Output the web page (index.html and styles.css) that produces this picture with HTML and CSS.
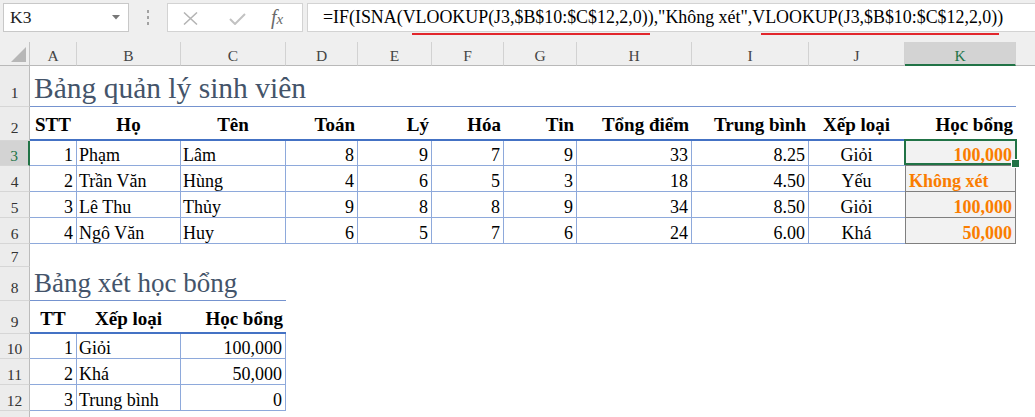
FILE: index.html
```html
<!DOCTYPE html>
<html lang="vi">
<head>
<meta charset="utf-8">
<title>Bảng quản lý sinh viên</title>
<link rel="stylesheet" href="styles.css">
</head>
<body>
<div class="formula-bar">
  <div class="name-box">
    <span class="name">K3</span>
    <svg class="drop" width="8" height="5" viewBox="0 0 8 5"><path d="M0 0 L8 0 L4 4.5 Z" fill="#777"/></svg>
  </div>
  <div class="grip"><i></i><i></i><i></i></div>
  <div class="fx-box">
    <svg class="ico-x" width="15" height="13" viewBox="0 0 15 13"><path d="M1 0.5 L14 12.5 M14 0.5 L1 12.5" stroke="#b4b4b4" stroke-width="1.5" fill="none"/></svg>
    <svg class="ico-ok" width="17" height="12" viewBox="0 0 17 12"><path d="M1 6 L6 11 L16 1" stroke="#c2c2c2" stroke-width="2" fill="none"/></svg>
    <span class="fx"><i>f</i><i class="sx">x</i></span>
  </div>
  <div class="formula">=IF(ISNA(<span class="mark">VLOOKUP(J3,$B$10:$C$12,2,0)</span>),"Không xét",<span class="mark">VLOOKUP(J3,$B$10:$C$12,2,0)</span>)</div>
</div>

<div class="sheet">
  <div class="row r-head">
    <div class="ch corner"><svg width="15" height="15" viewBox="0 0 15 15"><path d="M15 0 L15 15 L0 15 Z" fill="#b7b7b7"/></svg></div>
    <div class="ch">A</div><div class="ch">B</div><div class="ch">C</div><div class="ch">D</div>
    <div class="ch">E</div><div class="ch">F</div><div class="ch">G</div><div class="ch">H</div>
    <div class="ch">I</div><div class="ch">J</div><div class="ch sel">K</div><div class="ch last"></div>
  </div>

  <div class="row r1">
    <div class="rh">1</div>
    <div class="c title span-ak">Bảng quản lý sinh viên</div>
  </div>

  <div class="row r2">
    <div class="rh">2</div>
    <div class="c th ctr">STT</div>
    <div class="c th ctr">Họ</div>
    <div class="c th ctr">Tên</div>
    <div class="c th num">Toán</div>
    <div class="c th num">Lý</div>
    <div class="c th num">Hóa</div>
    <div class="c th num">Tin</div>
    <div class="c th num">Tổng điểm</div>
    <div class="c th num">Trung bình</div>
    <div class="c th ctr">Xếp loại</div>
    <div class="c th num">Học bổng</div>
  </div>

  <div class="row r3">
    <div class="rh sel">3</div>
    <div class="c td num">1</div><div class="c td">Phạm</div><div class="c td">Lâm</div>
    <div class="c td num">8</div><div class="c td num">9</div><div class="c td num">7</div><div class="c td num">9</div>
    <div class="c td num">33</div><div class="c td num">8.25</div><div class="c td ctr open">Giỏi</div>
    <div class="c calc num active">100,000</div>
  </div>

  <div class="row r4">
    <div class="rh">4</div>
    <div class="c td num">2</div><div class="c td">Trần Văn</div><div class="c td">Hùng</div>
    <div class="c td num">4</div><div class="c td num">6</div><div class="c td num">5</div><div class="c td num">3</div>
    <div class="c td num">18</div><div class="c td num">4.50</div><div class="c td ctr open">Yếu</div>
    <div class="c calc">Không xét</div>
  </div>

  <div class="row r5">
    <div class="rh">5</div>
    <div class="c td num">3</div><div class="c td">Lê Thu</div><div class="c td">Thủy</div>
    <div class="c td num">9</div><div class="c td num">8</div><div class="c td num">8</div><div class="c td num">9</div>
    <div class="c td num">34</div><div class="c td num">8.50</div><div class="c td ctr open">Giỏi</div>
    <div class="c calc num">100,000</div>
  </div>

  <div class="row r6">
    <div class="rh">6</div>
    <div class="c td num">4</div><div class="c td">Ngô Văn</div><div class="c td">Huy</div>
    <div class="c td num">6</div><div class="c td num">5</div><div class="c td num">7</div><div class="c td num">6</div>
    <div class="c td num">24</div><div class="c td num">6.00</div><div class="c td ctr open">Khá</div>
    <div class="c calc num">50,000</div>
  </div>

  <div class="row r7">
    <div class="rh">7</div>
  </div>

  <div class="row r8">
    <div class="rh">8</div>
    <div class="c title2 span-ac">Bảng xét học bổng</div>
  </div>

  <div class="row r9">
    <div class="rh">9</div>
    <div class="c th ctr">TT</div>
    <div class="c th ctr">Xếp loại</div>
    <div class="c th num">Học bổng</div>
  </div>

  <div class="row r10">
    <div class="rh">10</div>
    <div class="c td num">1</div><div class="c td">Giỏi</div><div class="c td num">100,000</div>
  </div>

  <div class="row r11">
    <div class="rh">11</div>
    <div class="c td num">2</div><div class="c td">Khá</div><div class="c td num">50,000</div>
  </div>

  <div class="row r12">
    <div class="rh">12</div>
    <div class="c td num">3</div><div class="c td">Trung bình</div><div class="c td num">0</div>
  </div>

  <div class="row r13">
    <div class="rh"></div>
  </div>
</div>
</body>
</html>
```

FILE: styles.css
```css
* { box-sizing: border-box; }

body {
  margin: 0;
  background: #ffffff;
  font-family: "Liberation Serif", "Times New Roman", serif;
  color: #000;
  overflow: hidden;
}

/* ---------- formula bar ---------- */
.formula-bar {
  display: flex;
  align-items: flex-start;
  height: 42px;
  padding: 3px 0 0 3px;
  background: #efefef;
}

.name-box {
  width: 126px;
  height: 29px;
  background: #fff;
  border: 1px solid #c8c8c8;
  display: flex;
  align-items: center;
  justify-content: space-between;
  padding: 0 8px 0 6px;
  font-family: "Liberation Serif", serif;
  font-size: 17.5px;
  color: #222;
}

.grip {
  width: 38px;
  height: 29px;
  display: flex;
  flex-direction: column;
  align-items: center;
  justify-content: center;
  gap: 3px;
}
.grip i {
  display: block;
  width: 2px;
  height: 3px;
  background: #a2a2a2;
}

.fx-box {
  width: 136px;
  height: 29px;
  background: #fff;
  border: 1px solid #d3d3d3;
  display: flex;
  align-items: center;
  padding-left: 15px;
}
.ico-x { margin-top: 1px; }
.ico-ok { margin-left: 31px; margin-top: 3px; }
.fx {
  margin-left: 25px;
  color: #6a6a6a;
  font-size: 20px;
  line-height: 20px;
  white-space: nowrap;
}
.fx .sx { font-size: 15px; }

.formula {
  flex: 1;
  height: 29px;
  margin-left: 4px;
  margin-right: -2px;
  background: #fff;
  border: 1px solid #d3d3d3;
  padding-left: 15px;
  font-size: 17.9px;
  line-height: 26px;
  white-space: nowrap;
  color: #000;
}
.mark { position: relative; }
.mark::after {
  content: "";
  position: absolute;
  left: 9px;
  right: -2px;
  bottom: -8px;
  height: 2px;
  background: #e2262c;
}

/* ---------- sheet grid ---------- */
.row {
  display: grid;
  grid-template-columns: 30px 47px 104px 105px 72px 74px 72px 73px 115px 117px 96px 111px 1fr;
}
.r-head { height: 24px; }
.r1 { height: 41px; }
.r2 { height: 34px; }
.r3 { height: 25px; }
.r4, .r5, .r6 { height: 26px; }
.r7 { height: 23px; }
.r8 { height: 34px; }
.r9 { height: 33px; }
.r10 { height: 25px; }
.r11, .r12 { height: 26px; }
.r13 { height: 10px; }

/* column headers */
.ch {
  display: flex;
  align-items: flex-end;
  justify-content: center;
  background: #efefef;
  border-right: 1px solid #d2d2d2;
  border-bottom: 1px solid #b9b9b9;
  font-size: 15.5px;
  line-height: 18px;
  color: #444;
}
.ch.corner {
  justify-content: flex-end;
  align-items: flex-end;
  padding: 0 3px 3px 0;
  border-right-color: #c4c4c4;
}
.ch.sel {
  background: #d3d3d3;
  color: #217346;
  border-bottom: 2px solid #217346;
  line-height: 17px;
}
.ch.last { border-right: none; }

/* row headers */
.rh {
  display: flex;
  align-items: flex-end;
  justify-content: center;
  background: #ececec;
  border-right: 1px solid #bcbcbc;
  border-bottom: 1px solid #d6d6d6;
  font-size: 15.5px;
  line-height: 18px;
  color: #333;
}
.r1 .rh { padding-bottom: 4px; }
.r2 .rh { padding-bottom: 3px; }
.r8 .rh { padding-bottom: 3px; }
.r9 .rh { padding-bottom: 2px; }
.rh.sel {
  background: #d3d3d3;
  color: #217346;
  border-right: 2px solid #217346;
}

/* cells */
.c {
  display: flex;
  align-items: flex-end;
  padding: 0 3px 0 2px;
  font-size: 18px;
  line-height: 20px;
  white-space: nowrap;
  min-width: 0;
}
.num { justify-content: flex-end; }
.ctr { justify-content: center; }

.title {
  font-size: 29.5px;
  line-height: 33px;
  color: #44546a;
  padding: 0 0 1px 4px;
  border-bottom: 1px solid #7593cf;
}
.span-ak { grid-column: 2 / 13; }

.title2 {
  font-size: 27px;
  line-height: 31px;
  color: #44546a;
  padding: 0 0 1px 4px;
  border-bottom: 1px solid #7593cf;
}
.span-ac { grid-column: 2 / 5; }

.th {
  font-weight: bold;
  font-size: 19px;
  line-height: 22px;
  padding-bottom: 3px;
  border-bottom: 2px solid #4472c4;
}
.r9 .th { padding-bottom: 2px; }

.td {
  border-right: 1px solid #8ea9db;
  border-bottom: 1px solid #8ea9db;
}
.td.open { border-right: none; }

.calc {
  background: #f2f2f2;
  color: #fa7d00;
  font-weight: bold;
  padding: 0 3px;
  border-left: 1px solid #7f7f7f;
  border-right: 1px solid #7f7f7f;
  border-bottom: 1px solid #7f7f7f;
}

.active { position: relative; }
.active::before {
  content: "";
  position: absolute;
  top: -2px;
  left: -2px;
  right: -2px;
  bottom: 0;
  border: 2px solid #217346;
}
.active::after {
  content: "";
  position: absolute;
  right: -5px;
  bottom: -3px;
  width: 7px;
  height: 7px;
  background: #217346;
  border: 1px solid #fff;
}
```
